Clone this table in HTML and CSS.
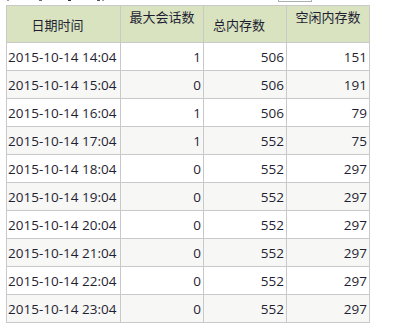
FILE: index.html
```html
<!DOCTYPE html>
<html lang="zh-CN">
<head>
<meta charset="utf-8">
<title>内存统计</title>
<link rel="stylesheet" href="styles.css">
</head>
<body>
<div class="toolbar">
  <span class="tb-mark m1"></span>
  <span class="tb-mark m2"></span>
  <span class="tb-mark m3"></span>
  <span class="tb-mark m4"></span>
  <span class="tb-mark m5"></span>
  <span class="tb-input"></span>
</div>
<table class="stats">
  <colgroup>
    <col class="c-date">
    <col class="c-num">
    <col class="c-num">
    <col class="c-num">
  </colgroup>
  <thead>
    <tr>
      <th class="mid shift">日期时间</th>
      <th class="top">最大会话数</th>
      <th class="mid shift">总内存数</th>
      <th class="top">空闲内存数</th>
    </tr>
  </thead>
  <tbody>
    <tr><td>2015-10-14 14:04</td><td>1</td><td>506</td><td>151</td></tr>
    <tr><td>2015-10-14 15:04</td><td>0</td><td>506</td><td>191</td></tr>
    <tr><td>2015-10-14 16:04</td><td>1</td><td>506</td><td>79</td></tr>
    <tr><td>2015-10-14 17:04</td><td>1</td><td>552</td><td>75</td></tr>
    <tr><td>2015-10-14 18:04</td><td>0</td><td>552</td><td>297</td></tr>
    <tr><td>2015-10-14 19:04</td><td>0</td><td>552</td><td>297</td></tr>
    <tr><td>2015-10-14 20:04</td><td>0</td><td>552</td><td>297</td></tr>
    <tr><td>2015-10-14 21:04</td><td>0</td><td>552</td><td>297</td></tr>
    <tr><td>2015-10-14 22:04</td><td>0</td><td>552</td><td>297</td></tr>
    <tr><td>2015-10-14 23:04</td><td>0</td><td>552</td><td>297</td></tr>
  </tbody>
</table>
</body>
</html>
```

FILE: styles.css
```css
html, body {
  margin: 0;
  padding: 0;
  background: #ffffff;
}

body {
  font-family: "Open Sans", "Noto Sans CJK SC", sans-serif;
  color: #1f1f33;
  font-size: 13px;
}

.toolbar {
  height: 3px;
  overflow: hidden;
  display: flex;
  align-items: flex-start;
  padding-left: 7px;
}

.tb-mark {
  flex: none;
  height: 1px;
  background: #9a9a9a;
}

.m1 { width: 2px; margin-right: 30px; }
.m2 { width: 3px; margin-right: 26px; background: #6a6a6a; }
.m3 { width: 3px; margin-right: 26px; background: #333; }
.m4 { width: 3px; margin-right: 2px; background: #555; }
.m5 { width: 2px; margin-right: 174px; }

.tb-input {
  flex: none;
  width: 32px;
  height: 1px;
  border: 1px solid #a8b0b0;
  border-top: none;
  margin-top: 0;
}

.stats {
  margin: 2px 0 0 6px;
  border-collapse: separate;
  border-spacing: 0;
  table-layout: fixed;
  width: 364px;
  border-top: 1px solid #c9c9c9;
  border-left: 1px solid #c9c9c9;
}

.c-date { width: 114px; }
.c-num { width: 83px; }

.stats th,
.stats td {
  border-right: 1px solid #c9c9c9;
  border-bottom: 1px solid #c9c9c9;
  box-sizing: border-box;
  white-space: nowrap;
  overflow: hidden;
}

.stats th {
  background: #d9e3c0;
  font-family: "Noto Sans CJK SC", sans-serif;
  font-weight: normal;
  font-size: 13px;
  line-height: 14px;
  height: 37px;
  padding: 0;
  text-align: center;
}

.stats th.mid {
  vertical-align: middle;
  padding-top: 1px;
}

.stats th.shift {
  padding-right: 12px;
}

.stats th.top {
  vertical-align: top;
  padding-top: 4px;
}

.stats td {
  height: 28px;
  padding: 0 2px 0 2px;
  font-size: 13.5px;
  line-height: 16px;
  text-align: right;
  vertical-align: middle;
}

.stats td:first-child {
  text-align: left;
  padding-left: 1px;
}

.stats tbody tr:nth-child(even) td {
  background: #f7f7f6;
}
```
